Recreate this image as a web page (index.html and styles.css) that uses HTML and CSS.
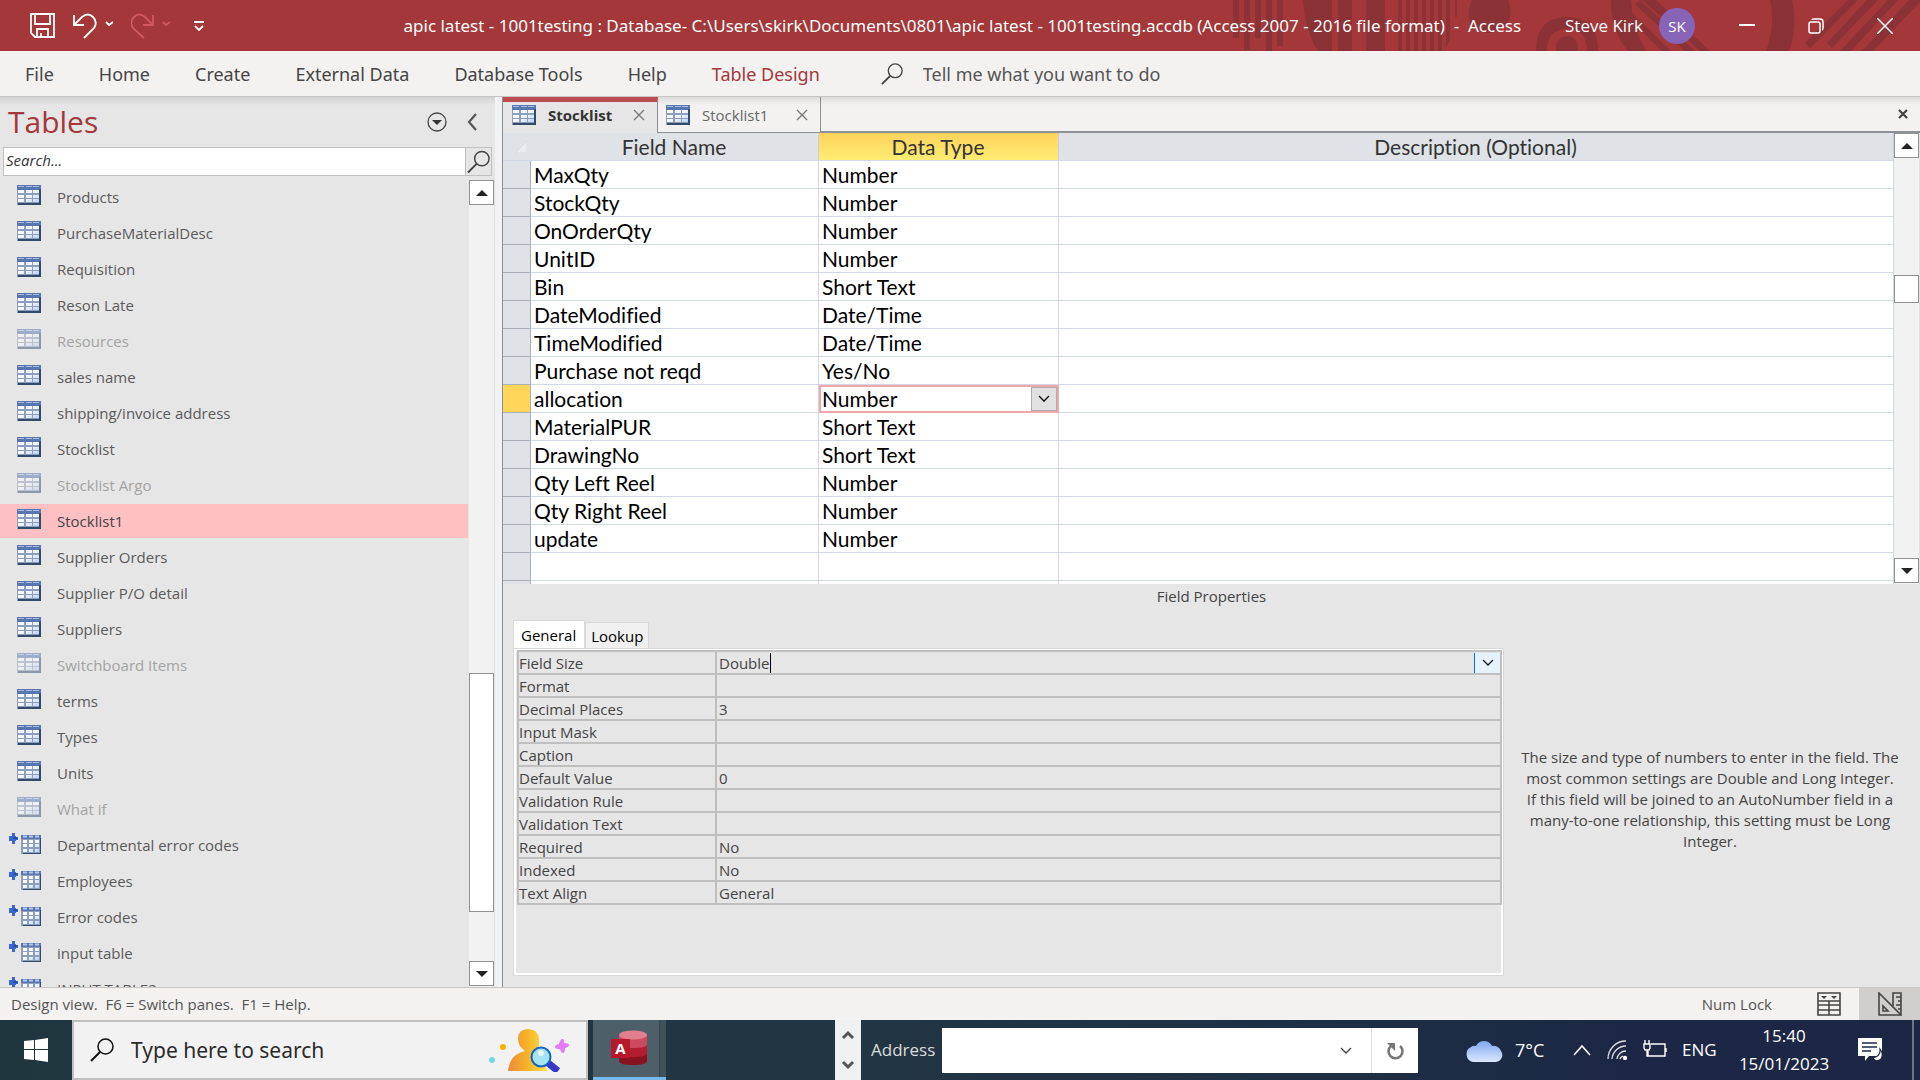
FILE: index.html
```html
<!DOCTYPE html>
<html lang="en">
<head>
<meta charset="utf-8">
<title>Access</title>
<link rel="stylesheet" href="styles.css">
</head>
<body>
<svg class="defs" width="0" height="0" aria-hidden="true">
  <defs>
    <linearGradient id="cell" x1="0" y1="0" x2="1" y2="1"><stop offset="0" stop-color="#fff"/><stop offset=".5" stop-color="#f4f8ff"/><stop offset="1" stop-color="#b9d0fb"/></linearGradient>
    <linearGradient id="frame" x1="0" y1="0" x2="0" y2="1"><stop offset="0" stop-color="#8aa0c8"/><stop offset="1" stop-color="#8f9db4"/></linearGradient>
    <linearGradient id="cloud" x1="0" y1="0" x2="0" y2="1"><stop offset="0" stop-color="#7fa6ee"/><stop offset="1" stop-color="#dbe8fd"/></linearGradient>
    <linearGradient id="gold" x1="0" y1="0" x2="1" y2="0"><stop offset="0" stop-color="#e98a3c"/><stop offset=".5" stop-color="#f8b428"/><stop offset="1" stop-color="#ffe04c"/></linearGradient>
    <symbol id="table" viewBox="0 0 24 20">
      <path d="M0 0h24v20H0z" fill="url(#frame)"/><path d="M0 0h24v5H0z" fill="#5877b0"/><path d="M1 1.500h6M9 1.500h6M16 1.500h6" stroke="#a9bbe0"/>
      <path d="M22 4h2v16H1v-2h21z" fill="#344a6c"/>
      <path d="M1 5h6v3H1zM9 5h6v3H9zM16 5h6v3h-6zM1 10h6v3H1zM9 10h6v3H9zM16 10h6v3h-6zM1 14h6v3H1zM9 14h6v3H9zM16 14h6v3h-6z" fill="url(#cell)"/>
    </symbol>
    <symbol id="linked" viewBox="0 0 33 22">
      <path d="M3 0h3v3h1v1h2v3H7v1H6v3H3V8H0V3h3z" fill="#3a66cf"/><path d="M4 4h4v2H4z" fill="#2850a8"/>
      <path d="M12 2h20v19H12z" fill="url(#frame)"/><path d="M12 2h20v4H12z" fill="#5877b0"/><path d="M14 3.500h4M20 3.500h4M26 3.500h4" stroke="#b9c8e6" stroke-width="2"/>
      <path d="M31 5h1v16H14v-1h17z" fill="#344a6c"/>
      <path d="M14 7h4v3h-4zM20 7h4v3h-4zM26 7h4v3h-4zM14 11h4v3h-4zM20 11h4v3h-4zM26 11h4v3h-4zM14 16h4v3h-4zM20 16h4v3h-4zM26 16h4v3h-4z" fill="url(#cell)"/>
    </symbol>
    <symbol id="glass" viewBox="0 0 24 24"><circle cx="15.500" cy="8.500" r="7.500" fill="none" stroke="currentColor" stroke-width="1.500"/><path d="M10 14L1 23" stroke="currentColor" stroke-width="2"/></symbol>
    <symbol id="chev" viewBox="0 0 12 12"><path d="M1 3l5 5 5-5" fill="none" stroke="currentColor" stroke-width="1.300"/></symbol>
    <symbol id="cross" viewBox="0 0 12 12"><path d="M1 1l10 10M11 1L1 11" stroke="currentColor" stroke-width="1.300"/></symbol>
    <symbol id="up" viewBox="0 0 12 6"><path d="M0 6L6 0l6 6z" fill="#222"/></symbol>
    <symbol id="down" viewBox="0 0 12 6"><path d="M0 0h12L6 6z" fill="#222"/></symbol>
  </defs>
</svg>

<header class="titlebar">
  <svg class="titlebar-art" viewBox="0 0 740 51" aria-hidden="true" fill="#8a3236">
    <path d="M53 0h6v38h-6zM64 0h6v50h-6zM75 0h6v38h-6zM86 0h6v51h-6zM97 0h6v46h-6zM123 0h29v51h-14q-13-20-15-51zM158 0h14v51h-14zM186 0h19v51h-19zM218 0h4v51h-4zM226 0h4v51h-4zM234 0h4v51h-4zM242 0h4v51h-4zM250 0h4v51h-4zM258 0h4v51h-4zM266 0h4v38l-4 10zM275 0h2v17h-2z"/>
    <path d="M292 0h36q6 16-3 26-17 14-32 0-8-12-1-26z"/>
    <path d="M356 51q0-34 31-34t31 34h-11q0-22-20-22t-20 22z"/><circle cx="387" cy="47" r="11"/>
    <path d="M431 0h20q1 28 15 51h-18q-18-22-17-51z"/>
    <path d="M455 4l50 47h10L460 0zM452 22l30 29h9L451 12zM476 0l54 51h-10L462 0z"/>
    <path d="M590 0h22q6 26-3 51h-23q10-26 4-51z"/>
    <path d="M668 0h10l-48 48-5-5zM687 0h11l-46 48-5-5zM708 0h10l-47 51h-11zM729 0h11v2l-47 49h-11z"/>
  </svg>
  <div class="quick">
    <button type="button" aria-label="Save"><svg width="25" height="25" viewBox="0 0 25 25" fill="none" stroke="#fff" stroke-width="1.800"><path d="M1 1h23v23H5l-4-4zM5 1v10h15V1M7 24v-8h11v8M11 24v-4"/></svg></button>
    <button type="button" aria-label="Undo"><svg width="40" height="26" viewBox="0 0 40 26" fill="none" stroke="#fff" stroke-width="1.800"><path d="M1 2v10h10M2 11L9 4Q15-1 20 4t1 11L11 25M33 9l3 3 4-3"/></svg></button>
    <button type="button" aria-label="Redo"><svg width="40" height="26" viewBox="0 0 40 26" fill="none" stroke="#cf5a5d" stroke-width="1.800"><path d="M22 2v10H12M21 11l-7-7Q8-1 3 4T2 15l11 10M32 9l3 3 4-3"/></svg></button>
    <button type="button" aria-label="Customise toolbar"><svg width="12" height="10" viewBox="0 0 12 10" fill="none" stroke="#fff" stroke-width="1.800"><path d="M1 1h10M2 5l4 4 4-4"/></svg></button>
  </div>
  <h1 class="caption">apic latest - 1001testing : Database- C:\Users\skirk\Documents\0801\apic latest - 1001testing.accdb (Access 2007 - 2016 file format)&nbsp; -&nbsp; Access</h1>
  <div class="account"><span>Steve Kirk</span><span class="avatar">SK</span></div>
  <div class="window-buttons">
    <button type="button" aria-label="Minimise"><svg width="16" height="16" viewBox="0 0 16 16"><path d="M0 7h16" stroke="#fff" stroke-width="2"/></svg></button>
    <button type="button" aria-label="Restore"><svg width="16" height="16" viewBox="0 0 16 16" fill="none" stroke="#fff" stroke-width="1.500"><rect x="1" y="4" width="11" height="11" rx="2"/><path d="M4 2q0-1 2-1h6q3 0 3 3v6q0 2-1 2"/></svg></button>
    <button type="button" aria-label="Close"><svg width="16" height="16" viewBox="0 0 16 16" stroke="#fff" stroke-width="1.500"><path d="M0 0l16 16M16 0L0 16"/></svg></button>
  </div>
</header>

<nav class="ribbon" aria-label="Ribbon">
  <a href="#">File</a><a href="#">Home</a><a href="#">Create</a><a href="#">External Data</a><a href="#">Database Tools</a><a href="#">Help</a><a href="#" class="current">Table Design</a>
  <label class="tell"><svg width="22" height="22"><use href="#glass"/></svg><input type="text" placeholder="Tell me what you want to do" aria-label="Tell me what you want to do"></label>
</nav>

<main class="workspace">
  <aside class="sidebar">
    <div class="sidebar-head">
      <h2>Tables</h2>
      <button type="button" aria-label="Table list options"><svg width="20" height="20" viewBox="0 0 20 20"><circle cx="10" cy="10" r="9" fill="none" stroke="#444" stroke-width="1.300"/><path d="M5 8h10l-5 5z" fill="#333"/></svg></button>
      <button type="button" aria-label="Collapse pane"><svg width="10" height="18" viewBox="0 0 10 18"><path d="M9 1L2 9l7 8" fill="none" stroke="#555" stroke-width="2.200"/></svg></button>
    </div>
    <div class="find"><input type="text" placeholder="Search..." aria-label="Search tables"><button type="button" aria-label="Search"><svg width="23" height="24"><use href="#glass"/></svg></button></div>
    <div class="list-area">
      <ul class="tables">
        <li><svg><use href="#table"/></svg>Products</li>
        <li><svg><use href="#table"/></svg>PurchaseMaterialDesc</li>
        <li><svg><use href="#table"/></svg>Requisition</li>
        <li><svg><use href="#table"/></svg>Reson Late</li>
        <li class="dim"><svg><use href="#table"/></svg>Resources</li>
        <li><svg><use href="#table"/></svg>sales name</li>
        <li><svg><use href="#table"/></svg>shipping/invoice address</li>
        <li><svg><use href="#table"/></svg>Stocklist</li>
        <li class="dim"><svg><use href="#table"/></svg>Stocklist Argo</li>
        <li class="selected"><svg><use href="#table"/></svg>Stocklist1</li>
        <li><svg><use href="#table"/></svg>Supplier Orders</li>
        <li><svg><use href="#table"/></svg>Supplier P/O detail</li>
        <li><svg><use href="#table"/></svg>Suppliers</li>
        <li class="dim"><svg><use href="#table"/></svg>Switchboard Items</li>
        <li><svg><use href="#table"/></svg>terms</li>
        <li><svg><use href="#table"/></svg>Types</li>
        <li><svg><use href="#table"/></svg>Units</li>
        <li class="dim"><svg><use href="#table"/></svg>What if</li>
        <li class="link"><svg><use href="#linked"/></svg>Departmental error codes</li>
        <li class="link"><svg><use href="#linked"/></svg>Employees</li>
        <li class="link"><svg><use href="#linked"/></svg>Error codes</li>
        <li class="link"><svg><use href="#linked"/></svg>input table</li>
        <li class="link"><svg><use href="#linked"/></svg>INPUT TABLE2</li>
      </ul>
      <div class="scroll list-scroll">
        <button type="button" aria-label="Scroll list up"><svg width="12" height="6"><use href="#up"/></svg></button>
        <span class="before"></span><span class="thumb"></span><span class="after"></span>
        <button type="button" aria-label="Scroll list down"><svg width="12" height="6"><use href="#down"/></svg></button>
      </div>
    </div>
  </aside>

  <section class="document">
    <div class="tabs">
      <div class="tab active"><svg width="24" height="20"><use href="#table"/></svg><a href="#">Stocklist</a><button type="button" aria-label="Close Stocklist"><svg width="12" height="12"><use href="#cross"/></svg></button></div>
      <div class="tab"><svg width="24" height="20"><use href="#table"/></svg><a href="#">Stocklist1</a><button type="button" aria-label="Close Stocklist1"><svg width="12" height="12"><use href="#cross"/></svg></button></div>
      <button type="button" class="close-all" aria-label="Close document"><svg width="12" height="10" viewBox="0 0 12 10"><path d="M2 1l8 8M10 1L2 9" stroke="#444" stroke-width="2.200"/></svg></button>
    </div>
    <div class="grid-area">
      <table class="fields">
        <colgroup><col class="c-sel"><col class="c-name"><col class="c-type"><col></colgroup>
        <thead><tr><th><svg width="12" height="12" viewBox="0 0 12 12"><path d="M12 0v12H0z" fill="#e9edf2" stroke="#c6ccd4" stroke-width=".5"/></svg></th><th>Field Name</th><th class="hot">Data Type</th><th>Description (Optional)</th></tr></thead>
        <tbody>
          <tr><th></th><td>MaxQty</td><td>Number</td><td></td></tr>
          <tr><th></th><td>StockQty</td><td>Number</td><td></td></tr>
          <tr><th></th><td>OnOrderQty</td><td>Number</td><td></td></tr>
          <tr><th></th><td>UnitID</td><td>Number</td><td></td></tr>
          <tr><th></th><td>Bin</td><td>Short Text</td><td></td></tr>
          <tr><th></th><td>DateModified</td><td>Date/Time</td><td></td></tr>
          <tr><th></th><td>TimeModified</td><td>Date/Time</td><td></td></tr>
          <tr><th></th><td>Purchase not reqd</td><td>Yes/No</td><td></td></tr>
          <tr class="editing"><th></th><td>allocation</td><td class="focus"><div class="combo"><span>Number</span><button type="button" aria-label="Choose data type"><svg width="12" height="12"><use href="#chev"/></svg></button></div></td><td></td></tr>
          <tr><th></th><td>MaterialPUR</td><td>Short Text</td><td></td></tr>
          <tr><th></th><td>DrawingNo</td><td>Short Text</td><td></td></tr>
          <tr><th></th><td>Qty Left Reel</td><td>Number</td><td></td></tr>
          <tr><th></th><td>Qty Right Reel</td><td>Number</td><td></td></tr>
          <tr><th></th><td>update</td><td>Number</td><td></td></tr>
          <tr><th></th><td></td><td></td><td></td></tr>
          <tr><th></th><td></td><td></td><td></td></tr>
        </tbody>
      </table>
      <div class="scroll grid-scroll">
        <button type="button" aria-label="Scroll fields up"><svg width="12" height="6"><use href="#up"/></svg></button>
        <span class="before"></span><span class="thumb"></span><span class="after"></span>
        <button type="button" aria-label="Scroll fields down"><svg width="12" height="6"><use href="#down"/></svg></button>
      </div>
    </div>
    <section class="properties">
      <h2>Field Properties</h2>
      <div class="prop-body">
        <div class="prop-main">
          <div class="prop-tabs"><button type="button" class="on">General</button><button type="button">Lookup</button></div>
          <div class="prop-panel">
            <table>
              <colgroup><col class="p-label"><col></colgroup>
              <tr><th><label for="size">Field Size</label></th><td><div class="size-edit"><input id="size" type="text" value="Double"><button type="button" aria-label="Choose field size"><svg width="12" height="12"><use href="#chev"/></svg></button></div></td></tr>
              <tr><th>Format</th><td></td></tr>
              <tr><th>Decimal Places</th><td>3</td></tr>
              <tr><th>Input Mask</th><td></td></tr>
              <tr><th>Caption</th><td></td></tr>
              <tr><th>Default Value</th><td>0</td></tr>
              <tr><th>Validation Rule</th><td></td></tr>
              <tr><th>Validation Text</th><td></td></tr>
              <tr><th>Required</th><td>No</td></tr>
              <tr><th>Indexed</th><td>No</td></tr>
              <tr><th>Text Align</th><td>General</td></tr>
            </table>
          </div>
        </div>
        <p class="hint">The size and type of numbers to enter in the field. The most common settings are Double and Long Integer. If this field will be joined to an AutoNumber field in a many-to-one relationship, this setting must be Long Integer.</p>
      </div>
    </section>
  </section>
</main>

<footer class="status">
  <span class="message">Design view.&nbsp; F6 = Switch panes.&nbsp; F1 = Help.</span>
  <span class="numlock">Num Lock</span>
  <button type="button" aria-label="Datasheet view"><svg width="24" height="24" viewBox="0 0 24 24" fill="none" stroke="#444" stroke-width="1.600"><path d="M1 1h22v22H1zM1 9h22M1 13h22M1 18h22M12 9v14"/><path d="M4 4h6L7 7zM14 4h6l-3 3z" fill="#444" stroke="none"/></svg></button>
  <button type="button" class="pressed" aria-label="Design view"><svg width="24" height="24" viewBox="0 0 24 24" fill="none" stroke="#444" stroke-width="1.600"><path d="M1 1v22h22zM5 14v5h5zM15 14V1h8v21M18 5h5M20 9h3M18 13h5M20 17h3"/></svg></button>
</footer>

<nav class="taskbar" aria-label="Taskbar">
  <button type="button" class="start" aria-label="Start"><svg width="24" height="24" viewBox="0 0 24 24" fill="#fff"><path d="M0 3l10-1v9H0zM11 2l13-2v11H11zM0 12h10v10L0 21zM11 12h13v12l-13-2z"/></svg></button>
  <label class="search"><svg width="24" height="24"><use href="#glass"/></svg><input type="text" placeholder="Type here to search" aria-label="Type here to search">
    <svg class="art" width="80" height="44" viewBox="0 0 80 44"><circle cx="3" cy="32" r="3" fill="#71d8e8"/><circle cx="14" cy="19" r="3" fill="#ffb000"/><path d="M19 43q2-17 17-20-7-5-7-12Q29 1 39 1t11 10v6q0 6-5 9 12 5 13 17z" fill="url(#gold)"/><path d="M59 35l10 8" stroke="#3438c8" stroke-width="7"/><circle cx="52" cy="29" r="9.500" fill="#a5e2f4" stroke="#1463c8" stroke-width="2"/><circle cx="52" cy="25" r="3" fill="#e3faff"/><path d="M74 11q1 0 1 4 5 0 5 2t-4 3q0 5-2 5t-3-4q-5 0-5-2t4-3q1-5 4-5z" fill="#e879f9"/></svg>
  </label>
  <button type="button" class="app" aria-label="Access"><svg width="38" height="38" viewBox="0 0 38 38"><path d="M9 5v26q0 4 14 4t14-4V5z" fill="#871321"/><path d="M9 5v18q0 4 14 4t14-4V5z" fill="#b31d2f"/><path d="M9 5v9q0 4 14 4t14-4V5z" fill="#cc4a5e"/><ellipse cx="23" cy="5" rx="14" ry="4.500" fill="#e0808f"/><rect x="1" y="9" width="19" height="19" rx="1" fill="#b7182b"/><text x="10.500" y="24" text-anchor="middle">A</text></svg></button>
  <span class="fill"></span>
  <div class="spin"><button type="button" aria-label="Previous"><svg width="14" height="10" viewBox="0 0 14 10"><path d="M2 8l5-5 5 5" fill="none" stroke="#555" stroke-width="3"/></svg></button><button type="button" aria-label="Next"><svg width="14" height="10" viewBox="0 0 14 10"><path d="M2 2l5 5 5-5" fill="none" stroke="#555" stroke-width="3"/></svg></button></div>
  <label class="address-label" for="address">Address</label>
  <div class="address"><input id="address" type="text"><button type="button" aria-label="Address history"><svg width="12" height="12"><use href="#chev"/></svg></button><button type="button" class="go" aria-label="Refresh"><svg width="18" height="20" viewBox="0 0 18 20"><path d="M5 5a7 7 0 1 0 9 0" fill="none" stroke="#777" stroke-width="2.500"/><path d="M1 2h8v8z" fill="#777"/></svg></button></div>
  <div class="tray">
    <svg width="38" height="24" viewBox="0 0 38 24"><path d="M8 24a8 8 0 0 1-2-15 6 6 0 0 1 5-1 9 9 0 0 1 16 0 8 8 0 0 1 9 5 7 7 0 0 1-6 11z" fill="url(#cloud)"/></svg>
    <span class="temp">7°C</span>
    <svg width="18" height="12" viewBox="0 0 18 12"><path d="M1 11l8-9 8 9" fill="none" stroke="#fff" stroke-width="1.600"/></svg>
    <svg width="20" height="20" viewBox="0 0 20 20" fill="none" stroke="#fff" stroke-width="1.300"><path d="M1 19A18 18 0 0 1 19 1M5 19A14 14 0 0 1 19 6M10 19a9 9 0 0 1 9-8" opacity=".85"/><path d="M13 19a5 5 0 0 1 3-3"/><circle cx="18" cy="18" r="1.500" fill="#fff"/></svg>
    <svg width="24" height="20" viewBox="0 0 24 20" fill="none" stroke="#fff" stroke-width="1.400"><path d="M8 4h14v12H5v-5M1 4h6v4l-1 2H2L1 8zM2 4V0M6 4V0M4 10v6h2M23 8v4"/></svg>
    <span class="lang">ENG</span>
    <time class="clock">15:40<br>15/01/2023</time>
    <svg class="note" width="26" height="26" viewBox="0 0 26 26"><path d="M1 1h24v18H12l-4 5v-5H1z" fill="#fff"/><path d="M5 6h15M5 10h15M5 14h9" stroke="#1b2845" stroke-width="1.500"/><path d="M23 12q1 7-7 9 3 5 8 1 3-5-1-10z" fill="#fff" stroke="#1b2845" stroke-width="1.200"/></svg>
    <span class="peek"></span>
  </div>
</nav>
</body>
</html>
```
FILE: styles.css
```css
* { box-sizing: border-box; }
body {
  margin: 0;
  height: 100vh;
  display: flex;
  flex-direction: column;
  overflow: hidden;
  background: #e6e6e6;
  color: #444;
  font: 15px/20px "Open Sans", "Noto Sans", sans-serif;
}
button, input { font: inherit; color: inherit; border: 0; background: none; padding: 0; margin: 0; outline: 0; border-radius: 0; min-width: 0; }
button { display: flex; align-items: center; justify-content: center; }
a { color: inherit; text-decoration: none; }
h1, h2, p, ul { margin: 0; padding: 0; font-weight: 400; }
svg { flex: none; display: block; }
.defs { position: absolute; }

.titlebar { position: relative; flex: none; height: 51px; display: flex; align-items: center; background: #a4373a; color: #fff; font-size: 17px; }
.titlebar-art { position: absolute; top: 0; right: 0; width: 740px; height: 51px; }
.quick { display: flex; align-items: center; gap: 18px; padding-left: 30px; flex: 1; }
.quick button:last-child { margin-left: 4px; }
.titlebar > div, .caption { position: relative; }
.caption { font: 17px/20px "Open Sans", "Noto Sans", sans-serif; white-space: nowrap; }
.caption { font-family: "Noto Sans", "Open Sans", sans-serif; }
.account { display: flex; align-items: center; gap: 16px; padding-left: 44px; }
.avatar { width: 36px; height: 36px; border-radius: 50%; background: #8764b8; font-size: 15px; line-height: 36px; text-align: center; }
.window-buttons { display: flex; padding: 0 1px 0 17px; }
.window-buttons button { width: 69px; height: 50px; }

.ribbon { flex: none; height: 46px; display: flex; align-items: center; gap: 45px; padding-left: 25px; background: #f3f2f1; border-bottom: 1px solid #c8c6c4; font-family: "Noto Sans", "Open Sans", sans-serif; font-size: 18px; }
.ribbon .current { color: #a4373a; }
.tell { display: flex; align-items: center; gap: 20px; flex: 1; padding-left: 16px; }
.tell input { width: 320px; }
.tell input::placeholder { color: #555; opacity: 1; }

.workspace { flex: 1; min-height: 0; display: flex; }
.sidebar { width: 502px; flex: none; display: flex; flex-direction: column; padding-right: 7px; background: linear-gradient(90deg, transparent 495px, #f0f2f4 495px), linear-gradient(#d2d2d2, #e6e6e6 8px); }
.sidebar-head { flex: none; height: 50px; display: flex; align-items: center; gap: 20px; padding: 0 18px 0 8px; }
.sidebar-head h2 { flex: 1; color: #a4373a; font-size: 30px; line-height: 40px; }
.find { flex: none; display: flex; height: 29px; margin: 0 3px; border: 1px solid #c0c0c0; }
.find input { flex: 1; background: #fff; padding: 0 0 4px 2px; font-style: italic; }
.find input::placeholder { color: #333; opacity: 1; }
.find button { width: 26px; border-left: 1px solid #c0c0c0; }
.list-area { flex: 1; min-height: 0; display: flex; padding-top: 4px; }
.tables { flex: 1; list-style: none; overflow: hidden; }
.tables li { height: 36px; display: flex; align-items: center; gap: 16px; padding: 0 0 0 17px; border: solid #e6e6e6; border-width: 0 1px 2px 0; color: #5a5a5a; }
.tables svg { width: 24px; height: 20px; margin-bottom: 4px; }
.tables .link { padding-left: 9px; gap: 15px; }
.tables .link svg { width: 33px; height: 22px; margin-bottom: 2px; }
.tables .dim { color: #a3a3a3; }
.dim svg { opacity: .5; }
.tables .selected { background: #fec0c2; color: #444; }

.scroll { width: 26px; flex: none; display: flex; flex-direction: column; background: #f2f2f2; border-right: 1px solid #e0e0e0; }
.scroll button { height: 25px; flex: none; background: #fff; border: 1px solid #929292; }
.scroll .thumb { background: #fff; border: 1px solid #929292; }
.list-scroll { padding-bottom: 1px; }
.list-scroll .before { flex: 469; }
.list-scroll .thumb { flex: 238; }
.list-scroll .after { flex: 49; }

.document { flex: 1; min-width: 0; display: flex; flex-direction: column; border-left: 1px solid #8b8f96; }
.tabs { flex: none; height: 36px; display: flex; background: linear-gradient(#dcdbda, #f3f2f1 8px); border-bottom: 2px solid #8d9097; }
.tab { height: 35px; display: flex; align-items: center; border-right: 1px solid #8b8f96; padding: 0 12px 0 8px; width: 163px; color: #666; background: linear-gradient(#dcdbda, #f3f2f1 8px); }
.tab a { flex: 1; padding-left: 12px; }
.tab.active { width: 155px; height: 36px; padding-left: 9px; background: #e6e6e6; border-top: 5px solid #bb4d50; color: #333; font-weight: 700; padding-bottom: 5px; }
.tab button { color: #777; }
.close-all { margin-left: auto; width: 34px; }
.grid-area { flex: none; display: flex; height: 451px; overflow: hidden; background: #fff; }
.fields { flex: 1; align-self: flex-start; table-layout: fixed; border-collapse: separate; border-spacing: 0; color: #000; font: 21px/26px Lato, "Open Sans", sans-serif; font-variant-ligatures: none; }
.c-sel { width: 28px; } .c-name { width: 288px; } .c-type { width: 240px; }
.fields tr { height: 28px; }
.fields th, .fields td { height: 28px; padding: 1px 4px 0 3px; font-weight: 400; text-align: left; border: solid #d0d7e5; border-width: 0 1px 1px 0; white-space: nowrap; }
.fields thead th { background: #dfe2e7; color: #333; text-align: center; border-right-color: #c9ced6; }
.fields thead th:first-child { border-right: 0; padding-left: 12px; }
.fields thead .hot { background: linear-gradient(#ffd35c, #ffec72); }
.fields tbody th { background: #dfe2e7; border-color: #a9afb8; }
.fields .editing th { background: #ffd659; }
.fields .focus { padding: 0; border: 2px solid #f4a5ab; }
.combo { display: flex; height: 24px; align-items: center; padding-left: 1px; }
.combo span { flex: 1; }
.combo button { width: 26px; height: 24px; background: #e1e1e1; border: 1px solid #adadad; }
.grid-scroll { padding-bottom: 1px; }
.grid-scroll .before { flex: 118; }
.grid-scroll .thumb { flex: 26; }
.grid-scroll .after { flex: 256; }

.properties { flex: 1; min-height: 0; display: flex; flex-direction: column; padding: 2px 20px 11px 10px; }
.properties h2 { font-size: 15px; text-align: center; line-height: 20px; padding-left: 10px; }
.prop-body { flex: 1; display: flex; gap: 16px; padding-top: 14px; }
.prop-main { flex: 1; display: flex; flex-direction: column; }
.prop-tabs { display: flex; align-items: flex-end; }
.prop-tabs button { height: 26px; padding: 0 5px; color: #000; background: #f0f0f0; border: 1px solid #d9d9d9; border-bottom: 0; }
.prop-tabs .on { height: 28px; padding: 0 8px 0 7px; background: #fff; }
.prop-panel { flex: 1; border: 1px solid #d9d9d9; padding: 1px 1px 1px 3px; background: #e6e6e6; box-shadow: inset 0 0 0 2px #fff; }
.prop-panel table { width: 100%; table-layout: fixed; border-collapse: collapse; }
.p-label { width: 198px; }
.prop-panel tr { height: 23px; }
.prop-panel th, .prop-panel td { border: 2px solid #bfbfbf; padding: 0 2px; text-align: left; font-weight: 400; line-height: 20px; height: 23px; }
.prop-panel th { padding: 0; }
.size-edit { display: flex; justify-content: space-between; height: 20px; }
.size-edit input { field-sizing: content; border-right: 1px solid #000; }
.size-edit button { width: 26px; margin-right: -2px; background: #e5f1fb; border-left: 1px solid #0078d7; color: #111; }
.hint { width: 380px; align-self: flex-start; padding-top: 127px; text-align: center; line-height: 21px; }

.status { flex: none; height: 33px; display: flex; align-items: center; background: #f3f2f1; border-top: 1px solid #c8c6c4; color: #555; padding-left: 11px; }
.message { flex: 1; }
.numlock { padding-right: 26px; }
.status button { width: 61px; height: 32px; }
.status .pressed { background: #d0cfcd; }

.taskbar { flex: none; height: 60px; display: flex; align-items: stretch; background: linear-gradient(90deg, #20363f, #223543 45%, #1f3144 65%, #1b2744 85%); color: #fff; font-size: 18px; }
.start { width: 72px; }
.search { width: 516px; display: flex; align-items: center; background: #f2f2f2; border: 2px solid #c0c0c0; padding: 0 17px 0 16px; color: #111; }
.search input { flex: 1; padding-left: 17px; font: 21px/30px "Noto Sans", "Open Sans", sans-serif; }
.search input::placeholder { color: #2b2b2b; opacity: 1; }
.app { width: 73px; margin-left: 5px; background: linear-gradient(90deg, #4d5f68 66px, #33434c 66px, #42525b 68px); border-bottom: 3px solid #76b9ed; padding-right: 2px; }
.app text { font: 700 15px "Open Sans", sans-serif; fill: #fff; }
.fill { width: 169px; }
.spin { width: 26px; display: flex; flex-direction: column; justify-content: space-around; align-items: center; background: #f0f0f0; }
.spin button { height: 20px; }
.address-label { align-self: center; padding: 0 5px 0 10px; font-size: 17px; width: 81px; color: #ddd; }
.address { flex: 1; display: flex; margin: 8px 0 7px; background: #fff; color: #444; }
.address input { flex: 1; }
.address button { width: 50px; }
.address .go { width: 47px; border-left: 1px solid #ddd; }
.tray { width: 502px; display: flex; align-items: center; padding-left: 47px; }
.temp { width: 70px; padding-left: 12px; }
.tray svg + svg { margin-left: 16px; }
.lang { width: 66px; padding-left: 15px; font-size: 17px; }
.clock { width: 102px; text-align: center; font-size: 17px; line-height: 28px; }
.tray .note { margin-left: 22px; }
.peek { margin-left: auto; width: 8px; align-self: stretch; border-left: 2px solid #6d7488; }
```
